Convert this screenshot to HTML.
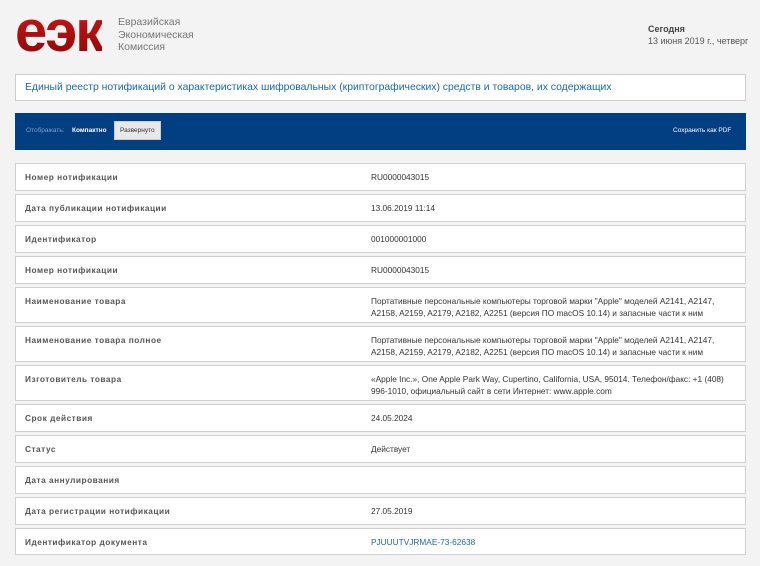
<!DOCTYPE html>
<html><head><meta charset="utf-8"><style>
*{margin:0;padding:0;box-sizing:border-box}
body{width:760px;height:566px;background:#f3f3f3;font-family:"Liberation Sans",sans-serif;position:relative;overflow:hidden}
.a{position:absolute}
.logo{left:15px;top:3px;font-size:58px;font-weight:bold;letter-spacing:-2px;line-height:58px;background:linear-gradient(#d21818,#8c0606);-webkit-background-clip:text;color:transparent}
.org{left:118px;top:16px;font-size:10.5px;line-height:12.5px;color:#777}
.today{left:648px;top:23px;font-size:9px;line-height:12px;color:#555}
.title{left:15px;top:74px;width:731px;height:27px;background:#fff;border:1px solid #ccc;font-size:10.4px;color:#1a67a8;padding:7px 0 0 9px}
.bar{left:15px;top:113px;width:731px;height:37px;background:#013f82}
.row{position:absolute;left:15px;width:731px;background:#fff;border:1px solid #cfcfcf;font-size:8.3px;color:#333}
.row .l{position:absolute;left:9px;top:8px;font-weight:bold;color:#555;letter-spacing:.5px}
.row .v{position:absolute;left:355px;top:8px;width:360px;line-height:11.5px}
</style></head><body>
<div class="a logo">еэк</div>
<div class="a org">Евразийская<br>Экономическая<br>Комиссия</div>
<div class="a today"><b style="color:#444">Сегодня</b><br>13 июня 2019 г., четверг</div>
<div class="a title">Единый реестр нотификаций о характеристиках шифровальных (криптографических) средств и товаров, их содержащих</div>
<div class="a bar">
<span class="a" style="left:11px;top:14px;font-size:6.5px;color:#7f9fc6">Отображать:</span>
<span class="a" style="left:57px;top:14px;font-size:6.5px;color:#fff;font-weight:bold">Компактно</span>
<span class="a" style="left:99px;top:8px;width:47px;height:19px;background:#e8e8e8;border:1px solid #ccc;font-size:6.5px;color:#333;padding:5px 0 0 5px">Развернуто</span>
<span class="a" style="left:658px;top:14px;font-size:6.5px;color:#fff">Сохранить как PDF</span>
</div>
<div class="row" style="top:163px;height:28px"><span class="l">Номер нотификации</span><span class="v">RU0000043015</span></div>
<div class="row" style="top:194px;height:28px"><span class="l">Дата публикации нотификации</span><span class="v">13.06.2019 11:14</span></div>
<div class="row" style="top:225px;height:28px"><span class="l">Идентификатор</span><span class="v">001000001000</span></div>
<div class="row" style="top:256px;height:28px"><span class="l">Номер нотификации</span><span class="v">RU0000043015</span></div>
<div class="row" style="top:287px;height:36px"><span class="l">Наименование товара</span><span class="v">Портативные персональные компьютеры торговой марки "Apple" моделей A2141, A2147, A2158, A2159, A2179, A2182, A2251 (версия ПО macOS 10.14) и запасные части к ним</span></div>
<div class="row" style="top:326px;height:36px"><span class="l">Наименование товара полное</span><span class="v">Портативные персональные компьютеры торговой марки "Apple" моделей A2141, A2147, A2158, A2159, A2179, A2182, A2251 (версия ПО macOS 10.14) и запасные части к ним</span></div>
<div class="row" style="top:365px;height:36px"><span class="l">Изготовитель товара</span><span class="v">«Apple Inc.», One Apple Park Way, Cupertino, California, USA, 95014. Телефон/факс: +1 (408) 996-1010, официальный сайт в сети Интернет: www.apple.com</span></div>
<div class="row" style="top:404px;height:28px"><span class="l">Срок действия</span><span class="v">24.05.2024</span></div>
<div class="row" style="top:435px;height:28px"><span class="l">Статус</span><span class="v">Действует</span></div>
<div class="row" style="top:466px;height:28px"><span class="l">Дата аннулирования</span><span class="v"></span></div>
<div class="row" style="top:497px;height:28px"><span class="l">Дата регистрации нотификации</span><span class="v">27.05.2019</span></div>
<div class="row" style="top:528px;height:27px"><span class="l">Идентификатор документа</span><span class="v" style="color:#1a67a8">PJUUUTVJRMAE-73-62638</span></div>
</body></html>
